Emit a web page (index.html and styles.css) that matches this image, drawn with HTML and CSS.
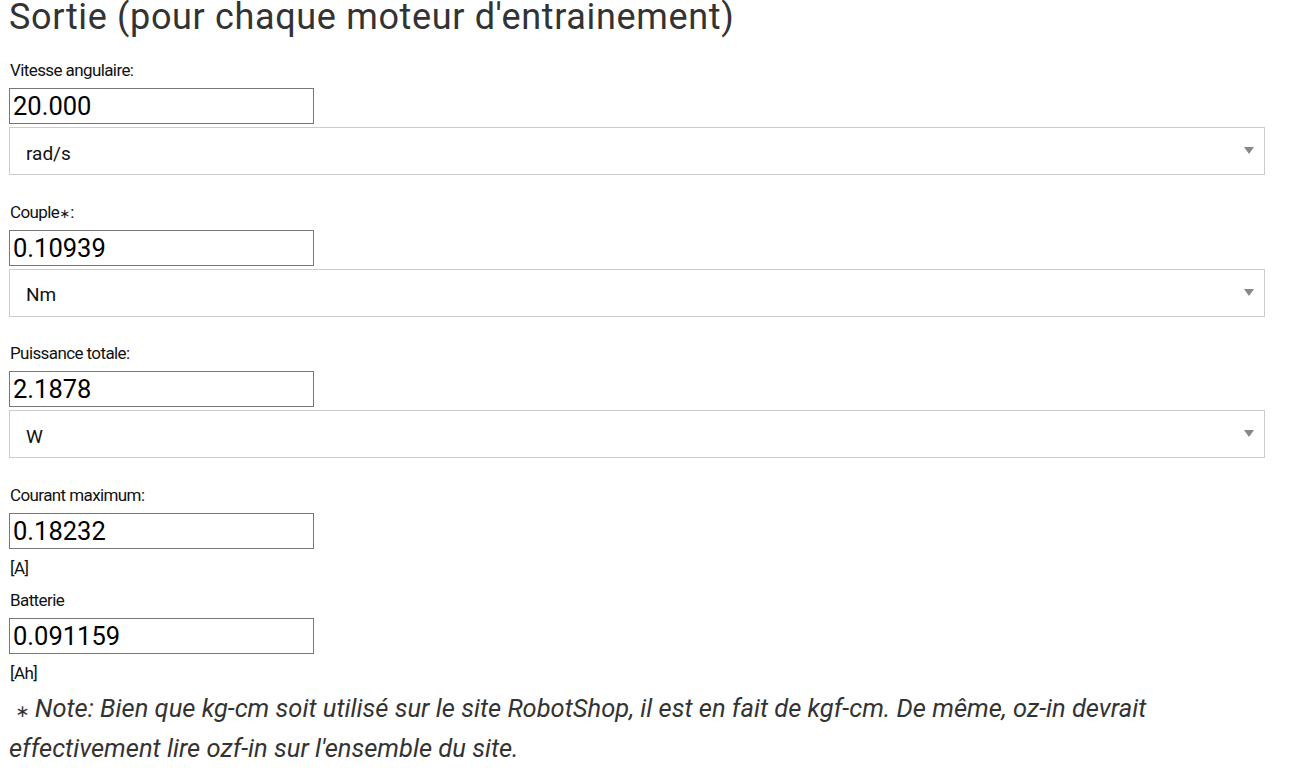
FILE: index.html
```html
<!DOCTYPE html>
<html lang="fr">
<head>
<meta charset="utf-8">
<title>Sortie</title>
<link rel="stylesheet" href="styles.css">
</head>
<body>
<main class="page">
  <h1 class="title">Sortie (pour chaque moteur d'entrainement)</h1>

  <section class="field">
    <label class="label">Vitesse angulaire:</label>
    <input class="value" type="text" value="20.000">
    <div class="select-wrap">
      <select class="unit-select"><option>rad/s</option></select>
      <span class="arrow"></span>
    </div>
  </section>

  <section class="field">
    <label class="label">Couple<span class="ast-small">∗</span>:</label>
    <input class="value" type="text" value="0.10939">
    <div class="select-wrap">
      <select class="unit-select"><option>Nm</option></select>
      <span class="arrow"></span>
    </div>
  </section>

  <section class="field">
    <label class="label">Puissance totale:</label>
    <input class="value" type="text" value="2.1878">
    <div class="select-wrap">
      <select class="unit-select"><option>W</option></select>
      <span class="arrow"></span>
    </div>
  </section>

  <section class="field plain">
    <label class="label">Courant maximum:</label>
    <input class="value" type="text" value="0.18232">
    <div class="unit">[A]</div>
  </section>

  <section class="field plain">
    <label class="label">Batterie</label>
    <input class="value" type="text" value="0.091159">
    <div class="unit">[Ah]</div>
  </section>

  <p class="note">&nbsp;<span class="ast">∗</span> Note: Bien que kg-cm soit utilisé sur le site RobotShop, il est en fait de kgf-cm. De même, oz-in devrait effectivement lire ozf-in sur l'ensemble du site.</p>
</main>
</body>
</html>
```

FILE: styles.css
```css
html, body {
  margin: 0;
  padding: 0;
  background: #ffffff;
}

body {
  font-family: Roboto, "Liberation Sans", sans-serif;
  color: #111;
}

.page {
  display: flex;
  flex-direction: column;
  align-items: flex-start;
  padding-left: 9px;
  width: 1256px;
}

.title {
  margin: 0 0 26px 0;
  font-size: 36px;
  line-height: 34px;
  letter-spacing: 0.65px;
  font-weight: 400;
  color: #333333;
  white-space: nowrap;
}

.field {
  display: flex;
  flex-direction: column;
  align-items: flex-start;
  width: 100%;
  margin-bottom: 26.7px;
}

.field.plain {
  margin-bottom: 12px;
}

.label {
  display: block;
  height: 20px;
  font-size: 17px;
  line-height: 20px;
  letter-spacing: -0.6px;
  color: #111;
  margin-bottom: 8px;
  padding-left: 1px;
}

.ast-small {
  font-family: "DejaVu Sans", sans-serif;
  font-size: 13px;
  line-height: 0;
  letter-spacing: 0;
}

.value {
  box-sizing: border-box;
  width: 305px;
  height: 36px;
  margin: 0;
  padding: 0 3px;
  border: 1px solid #777777;
  border-radius: 0;
  font-family: Roboto, "Liberation Sans", sans-serif;
  font-size: 25.5px;
  color: #000;
  background: #fff;
  outline: none;
}

.select-wrap {
  position: relative;
  width: 100%;
  margin-top: 3px;
}

.unit-select {
  -webkit-appearance: none;
  appearance: none;
  box-sizing: border-box;
  display: block;
  width: 100%;
  height: 48px;
  margin: 0;
  padding: 4px 0 0 16px;
  border: 1px solid #cccccc;
  border-radius: 0;
  background: #fff;
  font-family: Roboto, "Liberation Sans", sans-serif;
  font-size: 19px;
  color: #111;
  outline: none;
}

.arrow {
  position: absolute;
  right: 11px;
  top: 20px;
  width: 0;
  height: 0;
  border-left: 5.5px solid transparent;
  border-right: 5.5px solid transparent;
  border-top: 7px solid #888888;
  pointer-events: none;
}

.unit {
  font-size: 17px;
  line-height: 20px;
  letter-spacing: -0.6px;
  margin-top: 9px;
  padding-left: 1px;
  color: #111;
}

.note {
  margin: 0;
  margin-top: -7px;
  font-size: 25.5px;
  line-height: 40px;
  font-style: italic;
  color: #333333;
  white-space: normal;
}

.ast {
  font-family: "DejaVu Sans", sans-serif;
  font-style: normal;
  font-size: 17px;
  line-height: 0;
  letter-spacing: -1px;
}
```
